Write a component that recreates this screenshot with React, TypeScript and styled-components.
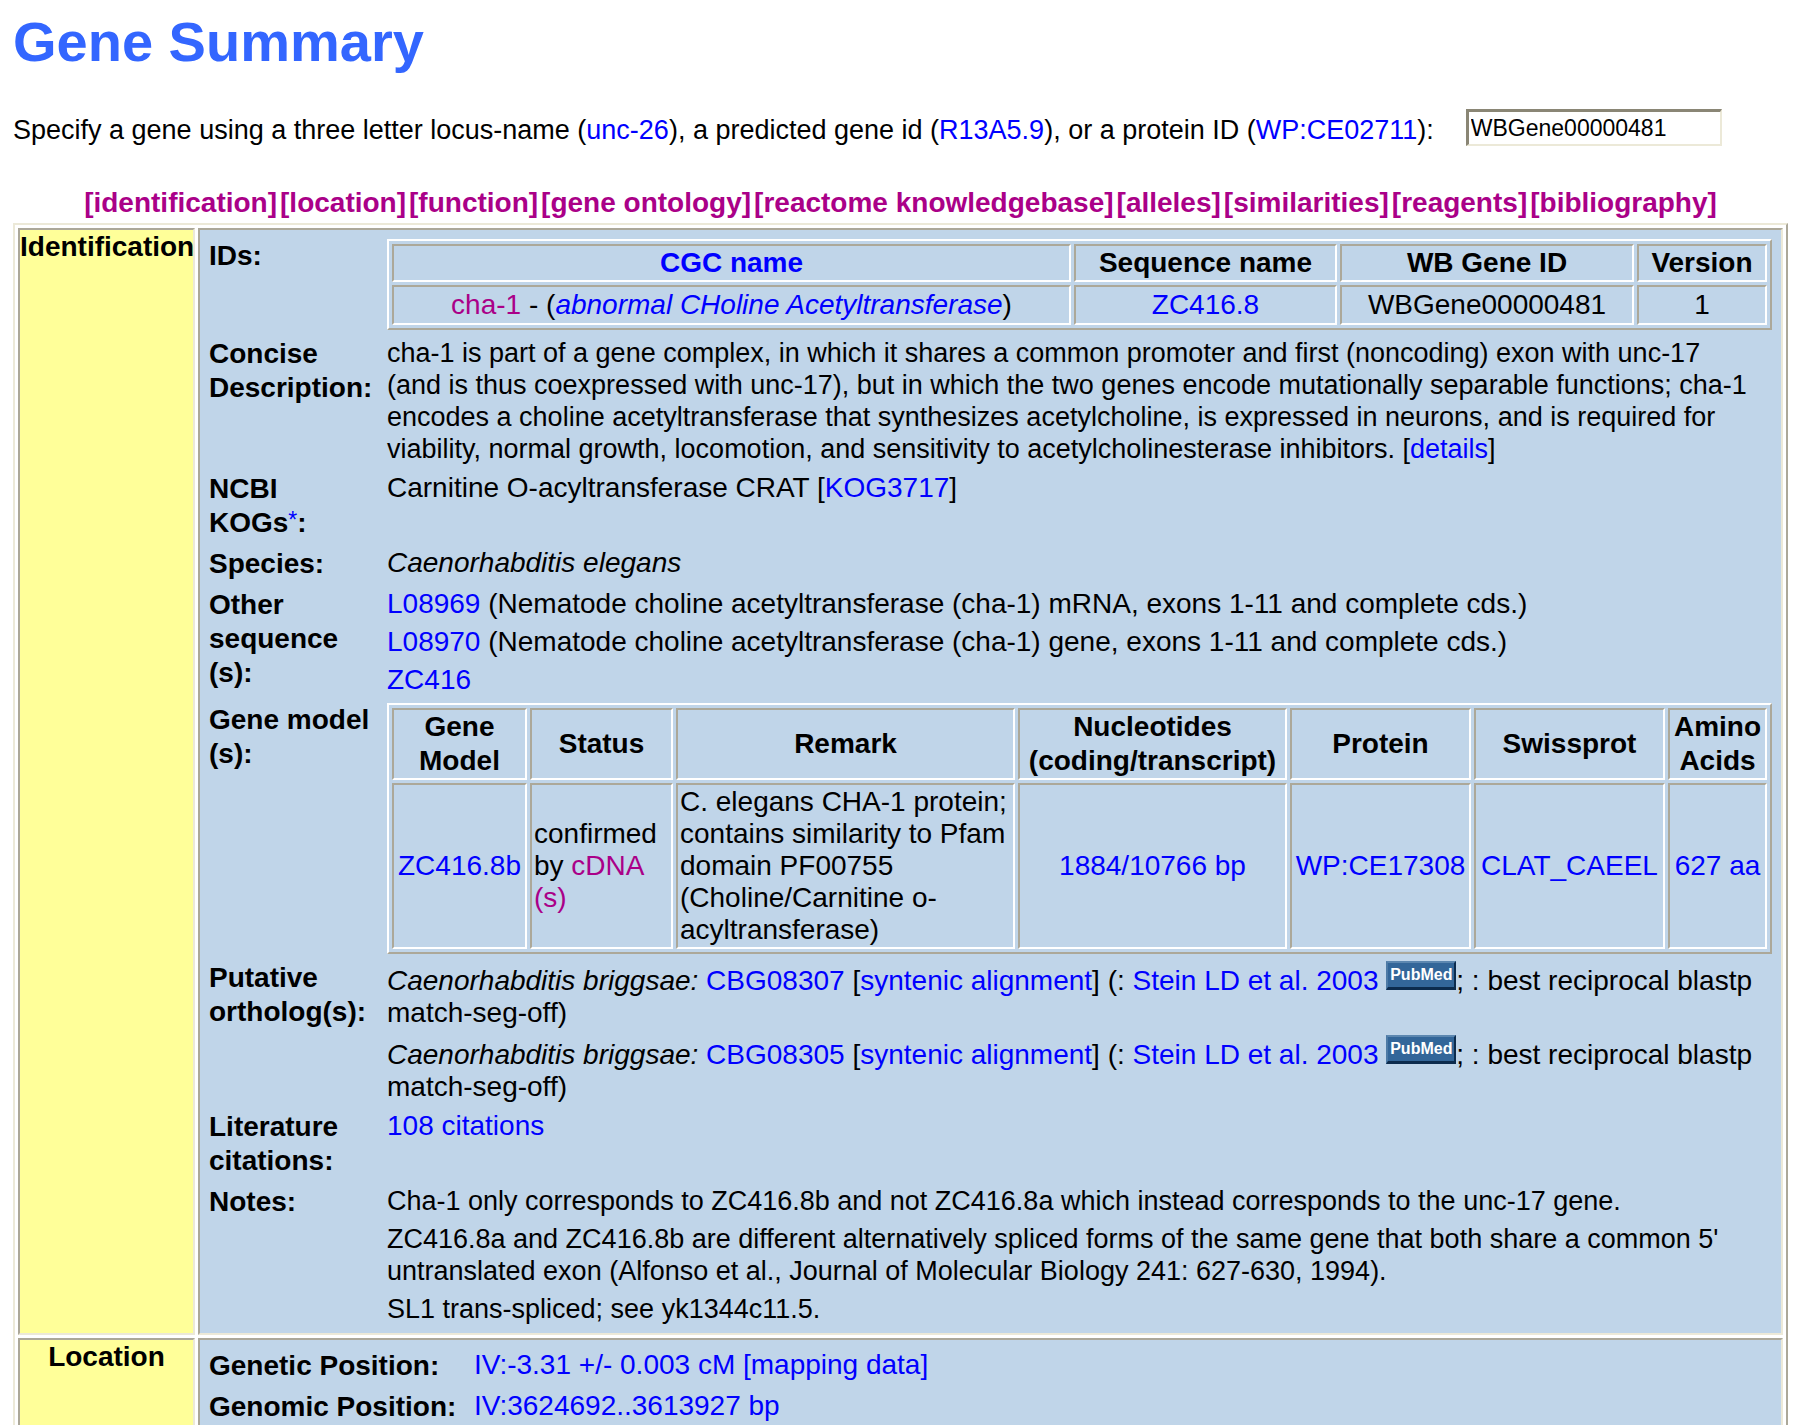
import React, { useState } from "react";
import styled, { createGlobalStyle } from "styled-components";

const shadow = "#aca899";
const highlight = "#ece9d8";
const link = "#0000ff";
const visited = "#aa0088";

const GlobalStyle = createGlobalStyle`
  *, *::before, *::after { box-sizing: border-box; }
  body {
    margin: 0;
    background: #ffffff;
    color: #000000;
    font-family: "Liberation Sans", Arial, sans-serif;
    font-size: 28px;
    line-height: 32px;
  }
`;

const Page = styled.div`
  padding: 10px 12px 0 13px;
  height: 100vh;
  overflow: hidden;
`;

const Title = styled.h1`
  margin: 0;
  color: #3366ff;
  font-size: 56px;
  line-height: 64px;
`;

const Search = styled.form`
  display: flex;
  align-items: flex-end;
  gap: 32px;
  margin-top: 34px;
  height: 38px;
  font-size: 27px;
  white-space: nowrap;
`;

const GeneInput = styled.input`
  width: 256px;
  height: 37px;
  padding: 0 0 0 2px;
  border: 3px solid;
  border-color: #8a8675 ${highlight} ${highlight} #8a8675;
  border-right-width: 2px;
  border-bottom-width: 2px;
  border-radius: 0;
  outline: none;
  background: #ffffff;
  font-family: inherit;
  font-size: 23px;
`;

const Link = styled.a<{ $visited?: boolean }>`
  color: ${(p) => (p.$visited ? visited : link)};
  text-decoration: none;
`;

const Nav = styled.nav`
  display: flex;
  justify-content: center;
  gap: 3px;
  margin-top: 40px;
  margin-bottom: 3px;
  font-weight: bold;
  line-height: 34px;
  white-space: nowrap;
`;

const NavLink = styled.a`
  color: ${visited};
  text-decoration: none;
`;

const Sections = styled.main`
  display: flex;
  flex-direction: column;
  gap: 3px;
  padding: 3px;
  border: 2px solid;
  border-color: ${highlight} ${shadow} ${shadow} ${highlight};
`;

const Section = styled.section`
  display: grid;
  grid-template-columns: 177px 1fr;
  gap: 3px;
`;

const SectionName = styled.h2`
  margin: 0;
  border: 2px solid;
  border-color: ${shadow} ${highlight} ${highlight} ${shadow};
  background: #ffff99;
  font-size: 28px;
  line-height: 34px;
  text-align: center;
`;

const Panel = styled.div`
  min-width: 0;
  padding: 9px 9px 8px;
  border: 2px solid;
  border-color: ${shadow} ${highlight} ${highlight} ${shadow};
  background: #c0d5e9;
`;

const Fields = styled.dl<{ $labelWidth: number }>`
  display: grid;
  grid-template-columns: ${(p) => p.$labelWidth}px minmax(0, 1fr);
  gap: 7px 6px;
  margin: 0;
`;

const Label = styled.dt`
  font-weight: bold;
  line-height: 34px;
`;

const Value = styled.dd<{ $prose?: boolean }>`
  display: flex;
  flex-direction: column;
  gap: 6px;
  margin: 0;
  padding-right: ${(p) => (p.$prose ? 16 : 0)}px;
  font-size: ${(p) => (p.$prose ? 27 : 28)}px;
`;

const Footmark = styled.sup`
  font-size: 23px;
  font-weight: normal;
  line-height: 0;
  vertical-align: 4px;
`;

const DataTable = styled.table<{ $rowPadding: number }>`
  width: 100%;
  table-layout: fixed;
  border: 2px solid;
  border-color: #ffffff ${shadow} ${shadow} #ffffff;
  border-collapse: separate;
  border-spacing: 3px;

  td {
    padding: ${(p) => p.$rowPadding}px 2px;
  }
`;

const Col = styled.col<{ $width?: number }>`
  width: ${(p) => (p.$width ? `${p.$width}px` : "auto")};
`;

const HeadCell = styled.th`
  padding: 0;
  border: 2px solid;
  border-color: ${shadow} #ffffff #ffffff ${shadow};
  line-height: 34px;
`;

const Cell = styled.td<{ $left?: boolean }>`
  border: 2px solid;
  border-color: ${shadow} #ffffff #ffffff ${shadow};
  text-align: ${(p) => (p.$left ? "left" : "center")};
`;

const PubMed = styled.a`
  display: inline-block;
  overflow: hidden;
  width: 70px;
  height: 29px;
  border: 2px solid;
  border-color: #5c87b0 #0c2b4d #0c2b4d #4d7aa5;
  border-bottom-width: 3px;
  background: #336699;
  color: #ffffff;
  font-size: 16px;
  font-weight: bold;
  line-height: 23px;
  text-align: center;
  text-decoration: none;
`;

const sections = [
  "identification",
  "location",
  "function",
  "gene ontology",
  "reactome knowledgebase",
  "alleles",
  "similarities",
  "reagents",
  "bibliography",
];

function Ortholog({ id }: { id: string }) {
  return (
    <div>
      <i>Caenorhabditis briggsae:</i> <Link href="#">{id}</Link> [
      <Link href="#">syntenic alignment</Link>] (: <Link href="#">Stein LD et al. 2003</Link>{" "}
      <PubMed href="#">PubMed</PubMed>; : best reciprocal blastp match-seg-off)
    </div>
  );
}

function IdTable() {
  return (
    <DataTable $rowPadding={2}>
      <colgroup>
        <Col />
        <Col $width={263} />
        <Col $width={294} />
        <Col $width={130} />
      </colgroup>
      <thead>
        <tr>
          <HeadCell scope="col"><Link href="#">CGC name</Link></HeadCell>
          <HeadCell scope="col">Sequence name</HeadCell>
          <HeadCell scope="col">WB Gene ID</HeadCell>
          <HeadCell scope="col">Version</HeadCell>
        </tr>
      </thead>
      <tbody>
        <tr>
          <Cell>
            <Link href="#" $visited>cha-1</Link> - (
            <Link href="#"><i>abnormal CHoline Acetyltransferase</i></Link>)
          </Cell>
          <Cell><Link href="#">ZC416.8</Link></Cell>
          <Cell>WBGene00000481</Cell>
          <Cell>1</Cell>
        </tr>
      </tbody>
    </DataTable>
  );
}

function ModelTable() {
  return (
    <DataTable $rowPadding={1}>
      <colgroup>
        <Col $width={135} />
        <Col $width={143} />
        <Col />
        <Col $width={269} />
        <Col $width={181} />
        <Col $width={191} />
        <Col $width={99} />
      </colgroup>
      <thead>
        <tr>
          <HeadCell scope="col">Gene Model</HeadCell>
          <HeadCell scope="col">Status</HeadCell>
          <HeadCell scope="col">Remark</HeadCell>
          <HeadCell scope="col">Nucleotides (coding/transcript)</HeadCell>
          <HeadCell scope="col">Protein</HeadCell>
          <HeadCell scope="col">Swissprot</HeadCell>
          <HeadCell scope="col">Amino Acids</HeadCell>
        </tr>
      </thead>
      <tbody>
        <tr>
          <Cell><Link href="#">ZC416.8b</Link></Cell>
          <Cell $left>confirmed by <Link href="#" $visited>cDNA<wbr />(s)</Link></Cell>
          <Cell $left>
            C. elegans CHA-1 protein; contains similarity to Pfam domain PF00755
            (Choline/Carnitine o-acyltransferase)
          </Cell>
          <Cell><Link href="#">1884/10766 bp</Link></Cell>
          <Cell><Link href="#">WP:CE17308</Link></Cell>
          <Cell><Link href="#">CLAT_CAEEL</Link></Cell>
          <Cell><Link href="#">627 aa</Link></Cell>
        </tr>
      </tbody>
    </DataTable>
  );
}

export default function App() {
  const [gene, setGene] = useState("WBGene00000481");
  return (
    <Page>
      <GlobalStyle />
      <Title>Gene Summary</Title>
      <Search onSubmit={(e) => e.preventDefault()}>
        <label htmlFor="gene">
          Specify a gene using a three letter locus-name (<Link href="#">unc-26</Link>), a predicted
          gene id (<Link href="#">R13A5.9</Link>), or a protein ID (<Link href="#">WP:CE02711</Link>):
        </label>
        <GeneInput id="gene" value={gene} onChange={(e) => setGene(e.target.value)} />
      </Search>
      <Nav>
        {sections.map((name) => (
          <NavLink key={name} href="#">[{name}]</NavLink>
        ))}
      </Nav>
      <Sections>
        <Section>
          <SectionName>Identification</SectionName>
          <Panel>
            <Fields $labelWidth={172}>
              <Label>IDs:</Label>
              <Value><IdTable /></Value>
              <Label>Concise Description:</Label>
              <Value $prose>
                <div>
                  cha-1 is part of a gene complex, in which it shares a common promoter and first
                  (noncoding) exon with unc-17 (and is thus coexpressed with unc-17), but in which
                  the two genes encode mutationally separable functions; cha-1 encodes a choline
                  acetyltransferase that synthesizes acetylcholine, is expressed in neurons, and is
                  required for viability, normal growth, locomotion, and sensitivity to
                  acetylcholinesterase inhibitors. [<Link href="#">details</Link>]
                </div>
              </Value>
              <Label>
                NCBI KOGs<Footmark><Link href="#">*</Link></Footmark>:
              </Label>
              <Value>
                <div>Carnitine O-acyltransferase CRAT [<Link href="#">KOG3717</Link>]</div>
              </Value>
              <Label>Species:</Label>
              <Value><i>Caenorhabditis elegans</i></Value>
              <Label>Other sequence<wbr />(s):</Label>
              <Value>
                <div>
                  <Link href="#">L08969</Link> (Nematode choline acetyltransferase (cha-1) mRNA,
                  exons 1-11 and complete cds.)
                </div>
                <div>
                  <Link href="#">L08970</Link> (Nematode choline acetyltransferase (cha-1) gene,
                  exons 1-11 and complete cds.)
                </div>
                <div><Link href="#">ZC416</Link></div>
              </Value>
              <Label>Gene model<wbr />(s):</Label>
              <Value><ModelTable /></Value>
              <Label>Putative ortholog(s):</Label>
              <Value>
                <Ortholog id="CBG08307" />
                <Ortholog id="CBG08305" />
              </Value>
              <Label>Literature citations:</Label>
              <Value><div><Link href="#">108 citations</Link></div></Value>
              <Label>Notes:</Label>
              <Value $prose>
                <div>
                  Cha-1 only corresponds to ZC416.8b and not ZC416.8a which instead corresponds to
                  the unc-17 gene.
                </div>
                <div>
                  ZC416.8a and ZC416.8b are different alternatively spliced forms of the same gene
                  that both share a common 5' untranslated exon (Alfonso et al., Journal of
                  Molecular Biology 241: 627-630, 1994).
                </div>
                <div>SL1 trans-spliced; see yk1344c11.5.</div>
              </Value>
            </Fields>
          </Panel>
        </Section>
        <Section>
          <SectionName>Location</SectionName>
          <Panel>
            <Fields $labelWidth={259}>
              <Label>Genetic Position:</Label>
              <Value><Link href="#">IV:-3.31 +/- 0.003 cM [mapping data]</Link></Value>
              <Label>Genomic Position:</Label>
              <Value><Link href="#">IV:3624692..3613927 bp</Link></Value>
            </Fields>
          </Panel>
        </Section>
      </Sections>
    </Page>
  );
}
